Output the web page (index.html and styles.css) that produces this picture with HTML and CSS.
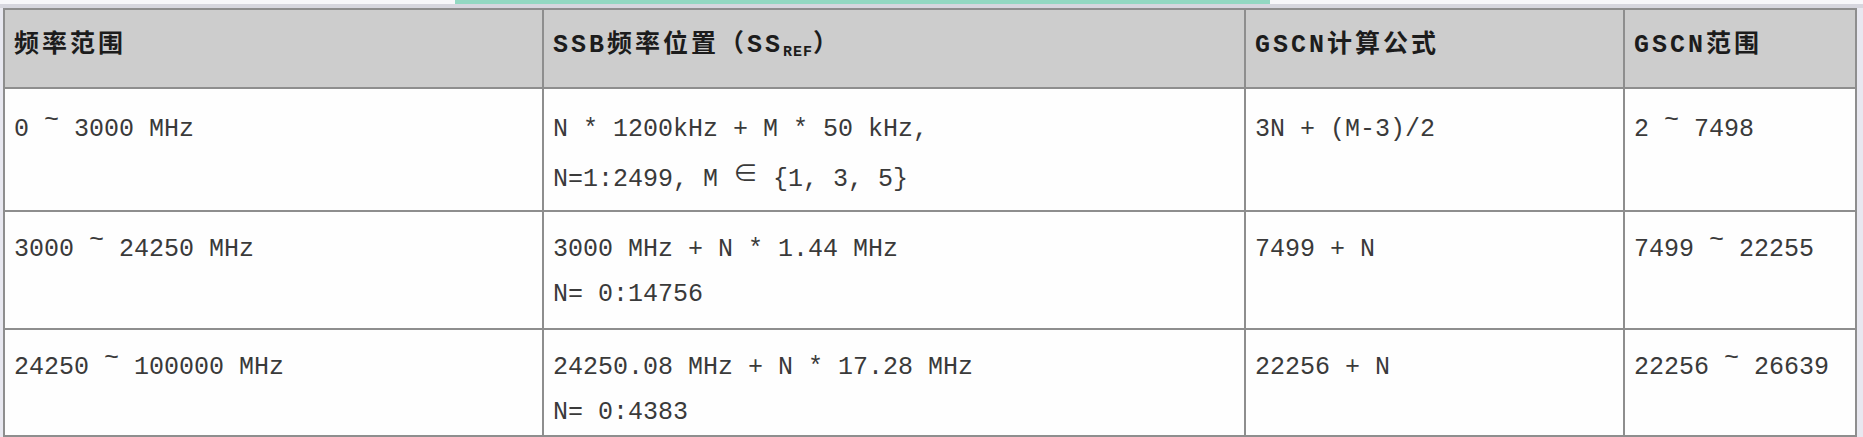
FILE: index.html
```html
<!DOCTYPE html>
<html lang="zh-CN">
<head>
<meta charset="utf-8">
<title>GSCN</title>
<link rel="stylesheet" href="styles.css">
</head>
<body>
<div class="topstrip"><div class="teal"></div></div>
<div class="page">
  <table class="freq">
    <colgroup>
      <col class="c1">
      <col class="c2">
      <col class="c3">
      <col class="c4">
    </colgroup>
    <thead>
      <tr class="r-head">
        <th>频率范围</th>
        <th>SSB频率位置（SS<sub>REF</sub>）</th>
        <th>GSCN计算公式</th>
        <th>GSCN范围</th>
      </tr>
    </thead>
    <tbody>
      <tr class="r1">
        <td>0 <span class="tl">~</span> 3000 MHz</td>
        <td>N * 1200kHz + M * 50 kHz,<br>N=1:2499, M <span class="in">∈</span> {1, 3, 5}</td>
        <td>3N + (M-3)/2</td>
        <td>2 <span class="tl">~</span> 7498</td>
      </tr>
      <tr class="r2">
        <td>3000 <span class="tl">~</span> 24250 MHz</td>
        <td>3000 MHz + N * 1.44 MHz<br>N= 0:14756</td>
        <td>7499 + N</td>
        <td>7499 <span class="tl">~</span> 22255</td>
      </tr>
      <tr class="r3">
        <td>24250 <span class="tl">~</span> 100000 MHz</td>
        <td>24250.08 MHz + N * 17.28 MHz<br>N= 0:4383</td>
        <td>22256 + N</td>
        <td>22256 <span class="tl">~</span> 26639</td>
      </tr>
    </tbody>
  </table>
</div>
</body>
</html>
```
FILE: styles.css
```css
html, body {
  margin: 0;
  padding: 0;
}
body {
  background: #e8e8f0;
  font-family: "Liberation Mono", "Noto Sans CJK SC", monospace;
  overflow: hidden;
}
.topstrip {
  height: 8px;
  display: flex;
  background: linear-gradient(#f7f7fa 0 4px, #d6d6de 4px 8px);
}
.teal {
  margin-left: 455px;
  width: 815px;
  height: 4px;
  background: #93d8c2;
}
.page {
  padding: 0 6px 0 3px;
}
.freq {
  width: 100%;
  border-collapse: collapse;
  table-layout: fixed;
  font-size: 25px;
  color: #3a3a3a;
  background: #fefefe;
  border: 2px solid #a7a9bf;
}
.c1 { width: 539px; }
.c2 { width: 702px; }
.c3 { width: 379px; }
.c4 { width: auto; }
.freq th,
.freq td {
  border: 2px solid #8e8e8e;
  padding: 13px 9px 0;
  text-align: left;
  vertical-align: top;
  line-height: 45px;
  white-space: nowrap;
}
.freq thead th {
  background: #cdcdcd;
  color: #1c1c1c;
  font-weight: bold;
  letter-spacing: 3px;
}
.freq th sub {
  font-size: 15px;
  letter-spacing: 1px;
  vertical-align: -4px;
  line-height: 0;
}
.freq td {
  padding-top: 15px;
}
.freq .r1 td {
  padding-top: 16px;
  line-height: 50px;
}
.r-head { height: 79px; }
.r1 { height: 123px; }
.r2 { height: 118px; }
.r3 { height: 107px; }
.tl {
  display: inline-block;
  vertical-align: 0.35em;
  line-height: 0;
}
.in {
  vertical-align: 0.15em;
  line-height: 0;
}
```
